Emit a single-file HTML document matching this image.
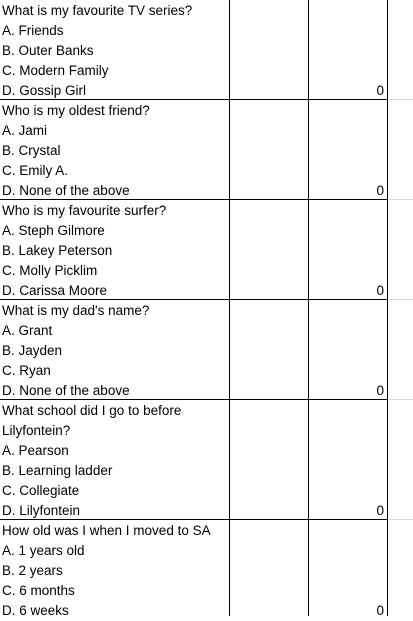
<!DOCTYPE html>
<html><head><style>
body{margin:0;width:413px;height:616px;overflow:hidden;background:#fff;font-family:"Liberation Sans",sans-serif;font-size:13.5px;color:#000;position:relative}
.t{position:absolute;left:2px;height:20px;line-height:21px;white-space:nowrap}
.z{position:absolute;left:370px;width:14px;text-align:right;height:20px;line-height:21px}
.v{position:absolute;top:0;width:1px;height:616px;background:#000}
.h{position:absolute;left:0;width:388px;height:1px;background:#000}
.g{position:absolute;left:388px;width:25px;height:1px;background:#dadada}
</style></head><body>
<div class="v" style="left:229px"></div>
<div class="v" style="left:308px"></div>
<div class="v" style="left:387px"></div>
<div class="h" style="top:99px"></div><div class="g" style="top:99px"></div>
<div class="h" style="top:199px"></div><div class="g" style="top:199px"></div>
<div class="h" style="top:299px"></div><div class="g" style="top:299px"></div>
<div class="h" style="top:399px"></div><div class="g" style="top:399px"></div>
<div class="h" style="top:519px"></div><div class="g" style="top:519px"></div>

<div class="t" style="top:0">What is my favourite TV series?</div>
<div class="t" style="top:20px">A. Friends</div>
<div class="t" style="top:40px">B. Outer Banks</div>
<div class="t" style="top:60px">C. Modern Family</div>
<div class="t" style="top:80px">D. Gossip Girl</div>
<div class="z" style="top:80px">0</div>

<div class="t" style="top:100px">Who is my oldest friend?</div>
<div class="t" style="top:120px">A. Jami</div>
<div class="t" style="top:140px">B. Crystal</div>
<div class="t" style="top:160px">C. Emily A.</div>
<div class="t" style="top:180px">D. None of the above</div>
<div class="z" style="top:180px">0</div>

<div class="t" style="top:200px">Who is my favourite surfer?</div>
<div class="t" style="top:220px">A. Steph Gilmore</div>
<div class="t" style="top:240px">B. Lakey Peterson</div>
<div class="t" style="top:260px">C. Molly Picklim</div>
<div class="t" style="top:280px">D. Carissa Moore</div>
<div class="z" style="top:280px">0</div>

<div class="t" style="top:300px">What is my dad's name?</div>
<div class="t" style="top:320px">A. Grant</div>
<div class="t" style="top:340px">B. Jayden</div>
<div class="t" style="top:360px">C. Ryan</div>
<div class="t" style="top:380px">D. None of the above</div>
<div class="z" style="top:380px">0</div>

<div class="t" style="top:400px">What school did I go to before</div>
<div class="t" style="top:420px">Lilyfontein?</div>
<div class="t" style="top:440px">A. Pearson</div>
<div class="t" style="top:460px">B. Learning ladder</div>
<div class="t" style="top:480px">C. Collegiate</div>
<div class="t" style="top:500px">D. Lilyfontein</div>
<div class="z" style="top:500px">0</div>

<div class="t" style="top:520px">How old was I when I moved to SA</div>
<div class="t" style="top:540px">A. 1 years old</div>
<div class="t" style="top:560px">B. 2 years</div>
<div class="t" style="top:580px">C. 6 months</div>
<div class="t" style="top:600px">D. 6 weeks</div>
<div class="z" style="top:600px">0</div>
</body></html>
